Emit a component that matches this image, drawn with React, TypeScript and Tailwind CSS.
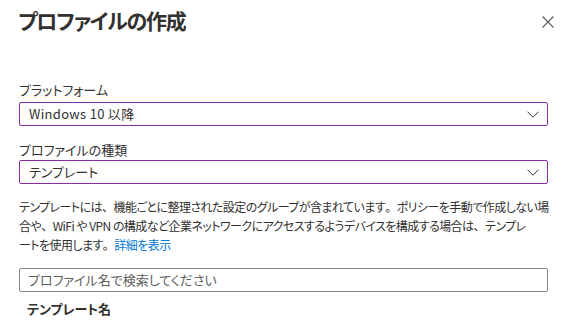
import React from "react";

const Chevron = () => (
  <svg width="12" height="7" viewBox="0 0 12 7" fill="none">
    <path d="M0.5 0.7 L6 6.2 L11.5 0.7" stroke="#323130" strokeWidth="1" />
  </svg>
);

const P = ({ c }: { c: string }) => <span className="[font-feature-settings:normal]">{c}</span>;

export default function App() {
  return (
    <div
      className="w-[565px] h-[326px] overflow-hidden bg-white text-[#323130] [font-feature-settings:'palt']"
      style={{ fontFamily: '"Noto Sans CJK JP", "Noto Sans", sans-serif' }}
    >
      <div className="flex items-start justify-between pl-[18px] pr-[11px] pt-[5px]">
        <h1 className="text-[21px] leading-[30px] font-semibold tracking-[-1.2px]">プロファイルの作成</h1>
        <button className="mt-[11px] w-[12px] h-[12px] flex items-center justify-center">
          <svg width="12" height="12" viewBox="0 0 12 12">
            <path d="M0.5 0.5 L11.5 11.5 M11.5 0.5 L0.5 11.5" stroke="#605e5c" strokeWidth="1.1" />
          </svg>
        </button>
      </div>

      <div className="pl-[19px] pr-[17px] mt-[46px]">
        <div className="text-[13px] leading-[18px]">プラットフォーム</div>
        <div className="mt-[3px] h-[24px] border border-[#8a2da5] rounded-[2px] flex items-center justify-between pl-[9px] pr-[8px]">
          <span className="text-[13px] tracking-[0.3px]">Windows 10 以降</span>
          <Chevron />
        </div>

        <div className="text-[13px] leading-[18px] mt-[15px]">プロファイルの種類</div>
        <div className="mt-[1px] h-[24px] border border-[#8a2da5] rounded-[2px] flex items-center justify-between pl-[9px] pr-[8px]">
          <span className="text-[13px]">テンプレート</span>
          <Chevron />
        </div>

        <p className="mt-[13px] text-[12px] leading-[19px] tracking-[-0.55px]">
          <span className="block whitespace-nowrap">
            テンプレートには<P c="、" />機能ごとに整理された設定のグループが含まれています<P c="。" />ポリシーを手動で作成しない場
          </span>
          <span className="block whitespace-nowrap">
            合や<P c="、" />WiFi や VPN の構成など企業ネットワークにアクセスするようデバイスを構成する場合は<P c="、" />テンプレ
          </span>
          <span className="block whitespace-nowrap">
            ートを使用します<P c="。" /><a className="text-[#0078d4]">詳細を表示</a>
          </span>
        </p>

        <div className="mt-[14px] h-[24px] border border-[#8a8886] rounded-[2px] flex items-center pl-[8px]">
          <span className="text-[13px] text-[#605e5c]">プロファイル名で検索してください</span>
        </div>

        <div className="mt-[8px] pl-[8px] text-[13px] leading-[18px] font-bold">テンプレート名</div>
      </div>
    </div>
  );
}
